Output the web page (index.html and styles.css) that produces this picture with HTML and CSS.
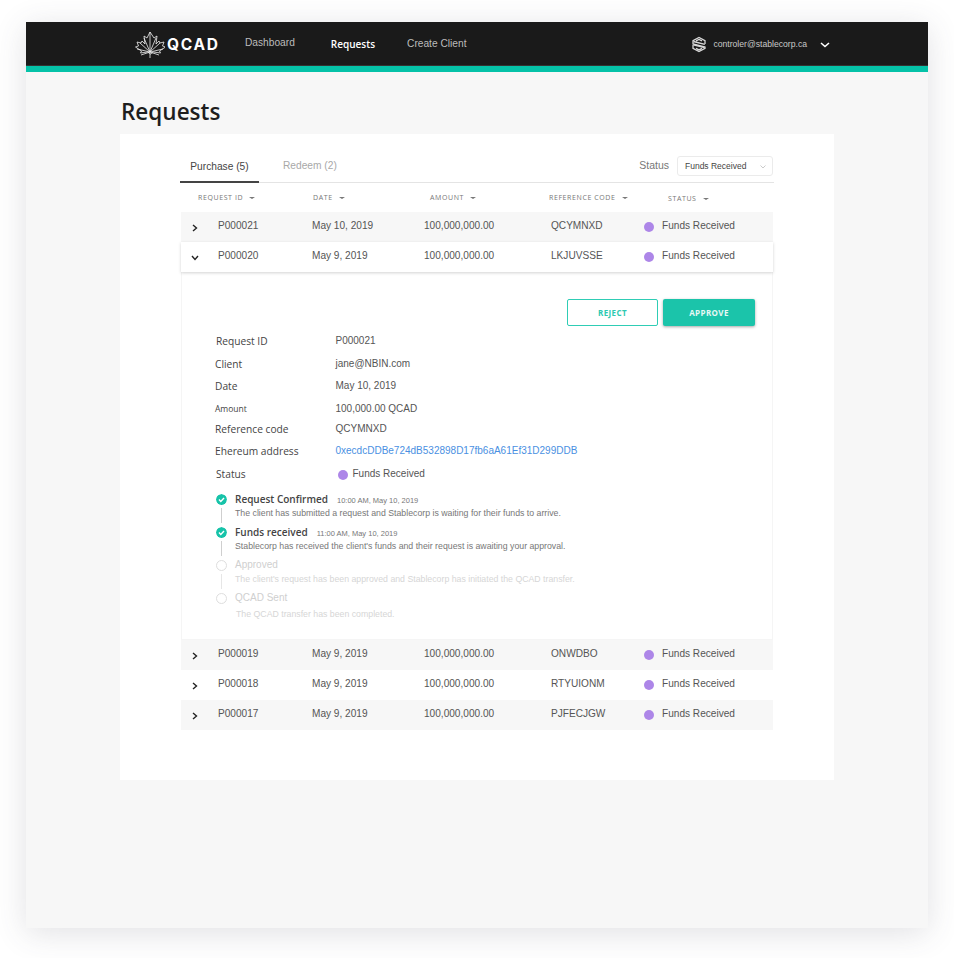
FILE: index.html
```html
<!DOCTYPE html>
<html lang="en">
<head>
  <meta charset="UTF-8" />
  <meta name="viewport" content="width=device-width, initial-scale=1.0"/>
  <title>QCAD Requests</title>
  <link rel="stylesheet" href="styles.css">
</head>
<body>
  <div class="window">
    <header class="topbar">
      <div class="brand">
        <svg class="brand-leaf" viewBox="0 0 30 28" fill="none" stroke="#efefef" stroke-width="0.8">
          <path d="M15 27V1M15 1l-3 6-3-2 1 8-3-3-1 2-4-1 1.500 4-3 1 6 4-1 2 7-1 3 2 3-2 7 1-1-2 6-4-3-1 1.500-4-4 1-1-2-3 3 1-8-3 2z"/>
          <path d="M15 21L5 12M15 21l10-9M15 21L9 7M15 21l6-14M15 21L2 18M15 21l13-3M6 24l9-3 9 3"/>
        </svg>
        <span class="brand-name">QCAD</span>
      </div>
      <nav class="nav">
        <a class="nav-link nav-dashboard">Dashboard</a>
        <a class="nav-link nav-requests">Requests</a>
        <a class="nav-link">Create Client</a>
      </nav>
      <div class="account">
        <svg class="account-icon" viewBox="0 0 16 17" fill="none" stroke="#d8d8d8" stroke-width="1.300">
          <path d="M14 8V4.600L8 1.500 2 4.600V8L14 11v1.400L8 15.500l-6-3.100V9"/>
          <path d="M5 4.800L8 3.400l3 1.500M2.500 5.500L13.800 8.300M2.300 8.800L13.500 11.500M5 12.400l3 1.500 3-1.500"/>
        </svg>
        <span class="account-email">controler@stablecorp.ca</span>
        <svg class="account-chevron" viewBox="0 0 10 6" fill="none" stroke="#fff" stroke-width="1.600"><path d="M1 1l4 3.500L9 1"/></svg>
      </div>
    </header>

    <main class="content">
      <h1 class="page-title">Requests</h1>
      <section class="card">
        <div class="tabbar">
          <div class="tab tab-active">Purchase (5)</div>
          <div class="tab tab-idle">Redeem (2)</div>
          <div class="status-filter">
            <span class="status-filter-label">Status</span>
            <div class="select">
              <span>Funds Received</span>
              <svg class="select-chevron" viewBox="0 0 6 4" fill="none" stroke="#b5b5b5" stroke-width="0.700"><path d="M0.500 0.500L3 3l2.500-2.500"/></svg>
            </div>
          </div>
        </div>

        <div class="table-head">
          <span class="th">REQUEST ID<i class="caret"></i></span>
          <span class="th">DATE<i class="caret"></i></span>
          <span class="th">AMOUNT<i class="caret"></i></span>
          <span class="th">REFERENCE CODE<i class="caret"></i></span>
          <span class="th th-status">STATUS<i class="caret"></i></span>
        </div>

        <div class="row row-shaded">
          <svg class="row-chevron" viewBox="0 0 6 8" fill="none" stroke="#222" stroke-width="1.400"><path d="M1 1l3.500 3L1 7"/></svg>
          <span>P000021</span><span>May 10, 2019</span><span>100,000,000.00</span><span>QCYMNXD</span>
          <span class="status-cell"><i class="dot"></i>Funds Received</span>
        </div>
        <div class="row row-open">
          <svg class="row-chevron row-chevron-down" viewBox="0 0 8 6" fill="none" stroke="#222" stroke-width="1.400"><path d="M1 1l3 3.500L7 1"/></svg>
          <span>P000020</span><span>May 9, 2019</span><span>100,000,000.00</span><span>LKJUVSSE</span>
          <span class="status-cell"><i class="dot"></i>Funds Received</span>
        </div>

        <div class="detail">
          <div class="detail-actions">
            <button class="btn btn-outline">REJECT</button>
            <button class="btn btn-solid">APPROVE</button>
          </div>
          <dl class="facts">
            <div class="fact"><dt>Request ID</dt><dd>P000021</dd></div>
            <div class="fact"><dt class="shift">Client</dt><dd>jane@NBIN.com</dd></div>
            <div class="fact"><dt class="shift">Date</dt><dd>May 10, 2019</dd></div>
            <div class="fact"><dt class="shift small">Amount</dt><dd>100,000.00 QCAD</dd></div>
            <div class="fact fact-tight"><dt class="shift">Reference code</dt><dd>QCYMNXD</dd></div>
            <div class="fact"><dt class="shift">Ehereum address</dt><dd><a class="address">0xecdcDDBe724dB532898D17fb6aA61Ef31D299DDB</a></dd></div>
            <div class="fact"><dt>Status</dt><dd class="status-cell fact-status"><i class="dot"></i>Funds Received</dd></div>
          </dl>
          <ol class="steps">
            <li class="step">
              <div class="step-rail">
                <svg class="step-check" viewBox="0 0 11 11"><circle cx="5.500" cy="5.500" r="5.500" fill="#17c3a9"/><path d="M3 5.600l1.800 1.800L8 4" fill="none" stroke="#fff" stroke-width="1.400"/></svg>
                <i class="step-line"></i>
              </div>
              <div>
                <div class="step-head"><span class="step-title">Request Confirmed</span><span class="step-time">10:00 AM, May 10, 2019</span></div>
                <p class="step-text">The client has submitted a request and Stablecorp is waiting for their funds to arrive.</p>
              </div>
            </li>
            <li class="step">
              <div class="step-rail">
                <svg class="step-check" viewBox="0 0 11 11"><circle cx="5.500" cy="5.500" r="5.500" fill="#17c3a9"/><path d="M3 5.600l1.800 1.800L8 4" fill="none" stroke="#fff" stroke-width="1.400"/></svg>
                <i class="step-line"></i>
              </div>
              <div>
                <div class="step-head"><span class="step-title">Funds received</span><span class="step-time">11:00 AM, May 10, 2019</span></div>
                <p class="step-text">Stablecorp has received the client's funds and their request is awaiting your approval.</p>
              </div>
            </li>
            <li class="step step-todo">
              <div class="step-rail">
                <i class="step-circle"></i>
                <i class="step-line"></i>
              </div>
              <div>
                <div class="step-head"><span class="step-title">Approved</span></div>
                <p class="step-text">The client's request has been approved and Stablecorp has initiated the QCAD transfer.</p>
              </div>
            </li>
            <li class="step step-todo">
              <div class="step-rail">
                <i class="step-circle"></i>
              </div>
              <div>
                <div class="step-head"><span class="step-title">QCAD Sent</span></div>
                <p class="step-text step-text-last">The QCAD transfer has been completed.</p>
              </div>
            </li>
          </ol>
        </div>

        <div class="row row-shaded">
          <svg class="row-chevron" viewBox="0 0 6 8" fill="none" stroke="#222" stroke-width="1.400"><path d="M1 1l3.500 3L1 7"/></svg>
          <span>P000019</span><span>May 9, 2019</span><span>100,000,000.00</span><span>ONWDBO</span>
          <span class="status-cell"><i class="dot"></i>Funds Received</span>
        </div>
        <div class="row">
          <svg class="row-chevron" viewBox="0 0 6 8" fill="none" stroke="#222" stroke-width="1.400"><path d="M1 1l3.500 3L1 7"/></svg>
          <span>P000018</span><span>May 9, 2019</span><span>100,000,000.00</span><span>RTYUIONM</span>
          <span class="status-cell"><i class="dot"></i>Funds Received</span>
        </div>
        <div class="row row-shaded">
          <svg class="row-chevron" viewBox="0 0 6 8" fill="none" stroke="#222" stroke-width="1.400"><path d="M1 1l3.500 3L1 7"/></svg>
          <span>P000017</span><span>May 9, 2019</span><span>100,000,000.00</span><span>PJFECJGW</span>
          <span class="status-cell"><i class="dot"></i>Funds Received</span>
        </div>
      </section>
    </main>
  </div>
</body>
</html>
```

FILE: styles.css
```css
body {
  margin: 0;
  background-color: #fff;
  font-family: "Liberation Sans", Arial, sans-serif;
  color: #555;
}

.window {
  width: 902px;
  height: 906px;
  margin: 22px 26px 30px;
  background-color: #f7f7f7;
  box-shadow: 0 5px 30px rgba(70, 70, 90, 0.16);
}

.topbar {
  display: flex;
  align-items: center;
  height: 44px;
  padding: 0 98px 0 109px;
  background-color: #1a1a1a;
  border-bottom: 6px solid #05c2a8;
  box-shadow: inset 0 -1px 0 #333;
}

.brand {
  display: flex;
  align-items: center;
  width: 110px;
}

.brand-leaf {
  width: 30px;
  height: 28px;
  margin-top: 1px;
}

.brand-name {
  margin-left: 2px;
  font-family: Inter, sans-serif;
  font-size: 15.500px;
  font-weight: 700;
  letter-spacing: 1.700px;
  color: #fff;
}

.nav {
  display: flex;
  gap: 32px;
  margin-bottom: 2px;
  font-size: 10.200px;
  line-height: 14px;
  color: #bcbcbc;
}

.nav-link {
  padding-top: 1px;
}

.nav-dashboard {
  padding-top: 0;
  margin-right: 4px;
}

.nav-requests {
  color: #fff;
  font-family: "Open Sans", sans-serif;
  font-weight: 600;
  font-size: 10px;
}

.account {
  display: flex;
  align-items: center;
  margin-left: auto;
}

.account-icon {
  width: 16px;
  height: 17px;
}

.account-email {
  margin: 0 13px 1px 6px;
  font-size: 8.650px;
  color: #c8c8c8;
}

.account-chevron {
  width: 10px;
  height: 6px;
  margin-top: 2px;
}

.content {
  padding: 0 94px;
}

.page-title {
  margin: 0;
  padding: 23px 0 5px 1px;
  font-family: "Open Sans", sans-serif;
  font-size: 22.500px;
  line-height: 34px;
  font-weight: 600;
  color: #1e1e1e;
}

.card {
  height: 646px;
  box-sizing: border-box;
  padding: 0 61px;
  background-color: #fff;
}

.tabbar {
  display: flex;
  align-items: flex-end;
  height: 49px;
  width: 594px;
  margin-left: -1px;
  border-bottom: 1px solid #e4e4e4;
  box-sizing: border-box;
}

.tab {
  box-sizing: border-box;
  height: 31px;
  padding-top: 9px;
  font-size: 10.200px;
}

.tab-active {
  width: 79px;
  text-align: center;
  color: #444;
  border-bottom: 2px solid #444;
  margin-bottom: -1px;
}

.tab-idle {
  margin-left: 24px;
  color: #a8a8a8;
}

.status-filter {
  display: flex;
  align-items: center;
  gap: 8px;
  margin-left: auto;
  margin-right: 1px;
  margin-bottom: 6px;
}

.status-filter-label {
  padding-bottom: 2px;
  font-size: 10.500px;
  color: #777;
}

.select {
  display: flex;
  align-items: center;
  justify-content: space-between;
  box-sizing: border-box;
  width: 96px;
  height: 20px;
  padding: 0 6px 0 7px;
  border: 1px solid #ebebeb;
  border-radius: 3px;
  font-size: 8.500px;
  color: #444;
}

.select-chevron {
  width: 6px;
  height: 4px;
  margin-top: 2px;
}

.table-head {
  display: grid;
  grid-template-columns: 115px 117px 119px 119px 1fr;
  align-items: center;
  height: 29px;
  padding-left: 17px;
  font-family: "Open Sans", sans-serif;
  font-size: 7px;
  letter-spacing: 0.600px;
  color: #777;
}

.th {
  display: flex;
  align-items: center;
}

.th-status {
  padding-top: 2px;
}

.caret {
  width: 0;
  height: 0;
  margin-left: 6px;
  border-left: 3px solid transparent;
  border-right: 3px solid transparent;
  border-top: 2px solid #777;
}

.row {
  display: grid;
  grid-template-columns: 37px 94px 112px 127px 93px 1fr;
  align-items: center;
  width: 592px;
  height: 30px;
  font-size: 10.100px;
  color: #555;
}

.row > span {
  padding-bottom: 3px;
}

.row-shaded {
  background-color: #f7f7f7;
}

.row-open {
  position: relative;
  box-shadow: 0 1px 3px rgba(0, 0, 0, 0.18);
}

.row-chevron {
  width: 6px;
  height: 8px;
  margin: 1px 0 0 11px;
}

.row-chevron-down {
  width: 8px;
  height: 6px;
  margin-left: 10px;
}

.status-cell {
  display: flex;
  align-items: center;
}

.dot {
  width: 10px;
  height: 10px;
  margin: 3px 8px 0 0;
  border-radius: 50%;
  background-color: #ad86e8;
}

.detail {
  box-sizing: border-box;
  width: 592px;
  height: 368px;
  padding-top: 27px;
  border: 1px solid #f5f5f5;
  border-top: 0;
}

.detail-actions {
  display: flex;
  justify-content: flex-end;
  gap: 5px;
  padding-right: 17px;
}

.btn {
  box-sizing: border-box;
  width: 92px;
  height: 27px;
  padding: 0;
  border-radius: 2px;
  font-family: "Open Sans", sans-serif;
  font-size: 8px;
  font-weight: 700;
  letter-spacing: 0.400px;
}

.btn-outline {
  width: 91px;
  background-color: #fff;
  border: 1px solid #2fcdb5;
  color: #2cc9b1;
}

.btn-solid {
  background-color: #1bc4aa;
  border: 0;
  color: #e8f8f5;
  box-shadow: 0 1px 3px rgba(0, 0, 0, 0.35);
}

.facts {
  margin: 4px 0 0 34px;
}

.fact {
  display: grid;
  grid-template-columns: 119.500px 1fr;
  align-items: center;
  height: 22.500px;
}

.fact-tight {
  margin-top: -2.500px;
}

.facts dt {
  font-family: "Open Sans", sans-serif;
  font-size: 10.200px;
  font-weight: 500;
  color: #444;
}

.facts dt.shift {
  margin-left: -1px;
}

.facts dt.small {
  font-size: 8.500px;
}

.facts dd {
  margin: 0;
  padding-bottom: 1px;
  font-size: 10px;
  color: #555;
}

.address {
  color: #4a90e2;
}

.facts .fact-status {
  padding: 0 0 0 2px;
}

.fact-status .dot {
  margin: 2px 5px 0 0;
}

.steps {
  list-style: none;
  margin: 6px 0 0 34px;
  padding: 0;
}

.step {
  display: grid;
  grid-template-columns: 19px 1fr;
  height: 33px;
}

.step-rail {
  display: flex;
  flex-direction: column;
  align-items: center;
  width: 11px;
  padding-top: 3px;
}

.step-check,
.step-circle {
  flex: none;
  box-sizing: border-box;
  width: 11px;
  height: 11px;
  border-radius: 50%;
}

.step-circle {
  border: 1px solid #dedede;
}

.step-line {
  width: 1px;
  height: 15px;
  margin-top: 3px;
  background-color: #cfcfcf;
}

.step-head {
  display: flex;
  align-items: baseline;
  gap: 9px;
  height: 16px;
  padding-top: 1px;
}

.step-title {
  font-family: "Open Sans", sans-serif;
  font-size: 10px;
  font-weight: 600;
  color: #444;
}

.step-time {
  font-size: 7.500px;
  color: #777;
}

.step-text {
  margin: 0;
  font-size: 8.750px;
  line-height: 11px;
  color: #777;
}

.step-todo .step-head {
  height: 15px;
  padding-top: 2px;
}

.step-todo .step-title {
  font-family: "Liberation Sans", Arial, sans-serif;
  font-weight: 400;
  color: #cfcfcf;
}

.step-todo .step-text {
  color: #d6d6d6;
}

.step-todo .step-line {
  background-color: #e6e6e6;
}

.step-text-last {
  margin: 2px 0 0 1px;
}
```
